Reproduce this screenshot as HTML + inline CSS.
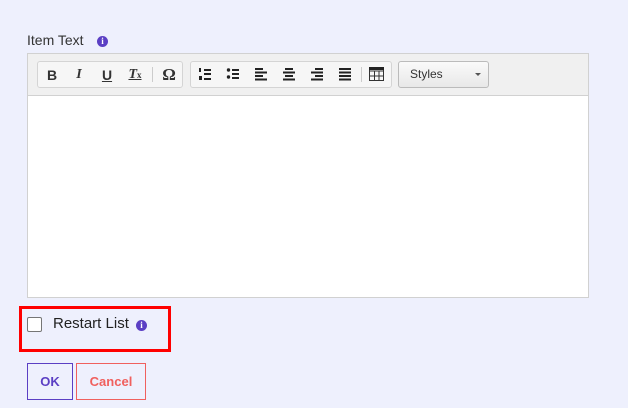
<!DOCTYPE html>
<html><head><style>
body{margin:0;width:628px;height:408px;background:#eef0fd;font-family:"Liberation Sans",Arial,sans-serif;position:relative;overflow:hidden}
.a{position:absolute}
.info{display:inline-block;width:11px;height:11px;border-radius:50%;background:#5b3fc4;color:#fff;font:bold 9px/11px "Liberation Serif",serif;text-align:center}
.grp{position:absolute;top:61px;height:25px;border:1px solid #d4d4d4;border-radius:3px;background:#f6f6f6}
.b{position:absolute;top:4px;font-size:14px;color:#333;line-height:18px;text-align:center;width:20px}
</style></head><body>
<div class="a" style="left:27px;top:32px;font-size:14px;color:#333">Item Text</div>
<div class="a info" style="left:97px;top:36px">i</div>
<div class="a" style="left:27px;top:53px;width:560px;height:243px;border:1px solid #d1d1d1;background:#fff"></div>
<div class="a" style="left:28px;top:54px;width:560px;height:41px;background:#f0f0f0;border-bottom:1px solid #d1d1d1"></div>
<div class="grp" style="left:37px;width:144px">
 <div class="b" style="left:4px;font-weight:bold">B</div>
 <div class="b" style="left:31px;font-style:italic;font-weight:bold;font-family:'Liberation Serif',serif">I</div>
 <div class="b" style="left:59px;text-decoration:underline;font-weight:bold">U</div>
 <div class="b" style="left:87px;font-style:italic;font-weight:bold;text-decoration:underline;font-family:'Liberation Serif',serif">T<span style="font-size:9px;font-style:normal">x</span></div>
 <div class="a" style="left:114px;top:5px;width:1px;height:15px;background:#ccc"></div>
 <div class="b" style="left:121px;font-size:17px;font-family:'Liberation Serif',serif;font-weight:bold">Ω</div>
</div>
<div class="grp" style="left:190px;width:200px">
 <svg class="a" style="left:0;top:0" width="200" height="25" fill="#222">
  <g transform="translate(8,6)"><rect x="5" y="1" width="7" height="2"/><rect x="5" y="5" width="7" height="2"/><rect x="5" y="10" width="7" height="2"/><rect x="0" y="0" width="2" height="4"/><rect x="0" y="8" width="3" height="4"/></g>
  <g transform="translate(36,6)"><circle cx="1.5" cy="2" r="1.7"/><circle cx="1.5" cy="9" r="1.7"/><rect x="5" y="1" width="7" height="2"/><rect x="5" y="5" width="7" height="2"/><rect x="5" y="9" width="7" height="2"/></g>
  <g transform="translate(64,6)"><rect width="8" height="2"/><rect y="3.5" width="12" height="2"/><rect y="7" width="8" height="2"/><rect y="10.5" width="12" height="2"/></g>
  <g transform="translate(92,6)"><rect x="2" width="8" height="2"/><rect y="3.5" width="12" height="2"/><rect x="2" y="7" width="8" height="2"/><rect y="10.5" width="12" height="2"/></g>
  <g transform="translate(120,6)"><rect x="4" width="8" height="2"/><rect y="3.5" width="12" height="2"/><rect x="4" y="7" width="8" height="2"/><rect y="10.5" width="12" height="2"/></g>
  <g transform="translate(148,6)"><rect width="12" height="2"/><rect y="3.5" width="12" height="2"/><rect y="7" width="12" height="2"/><rect y="10.5" width="12" height="2"/></g>
  <rect x="170" y="5" width="1" height="15" fill="#ccc"/>
  <g transform="translate(178,5)" fill="none" stroke="#333"><rect x="0.5" y="0.5" width="14" height="13"/><path d="M0 4h15M0 9h15M5.5 4v10M10 4v10"/></g>
  <rect x="178" y="5" width="15" height="3"/>
 </svg>
</div>
<div class="a" style="left:398px;top:61px;width:89px;height:25px;border:1px solid #bbb;border-radius:3px;background:linear-gradient(#fafafa,#e8e8e8)">
 <span class="a" style="left:11px;top:5px;font-size:12px;color:#333">Styles</span>
 <span class="a" style="left:76px;top:11px;border:3px solid transparent;border-top-color:#555;border-bottom:0"></span>
</div>
<div class="a" style="left:19px;top:306px;width:146px;height:40px;border:3px solid #f00"></div>
<div class="a" style="left:27px;top:317px;width:13px;height:13px;border:1px solid #767676;border-radius:2px;background:#fff"></div>
<div class="a" style="left:53px;top:315px;font-size:15px;color:#222">Restart List</div>
<div class="a info" style="left:136px;top:320px">i</div>
<div class="a" style="left:27px;top:363px;width:44px;height:35px;border:1px solid #5b3fc4;color:#5b3fc4;font-weight:bold;font-size:13px;line-height:35px;text-align:center">OK</div>
<div class="a" style="left:76px;top:363px;width:68px;height:35px;border:1px solid #f0605e;color:#f0605e;font-weight:bold;font-size:13px;line-height:35px;text-align:center">Cancel</div>
</body></html>
